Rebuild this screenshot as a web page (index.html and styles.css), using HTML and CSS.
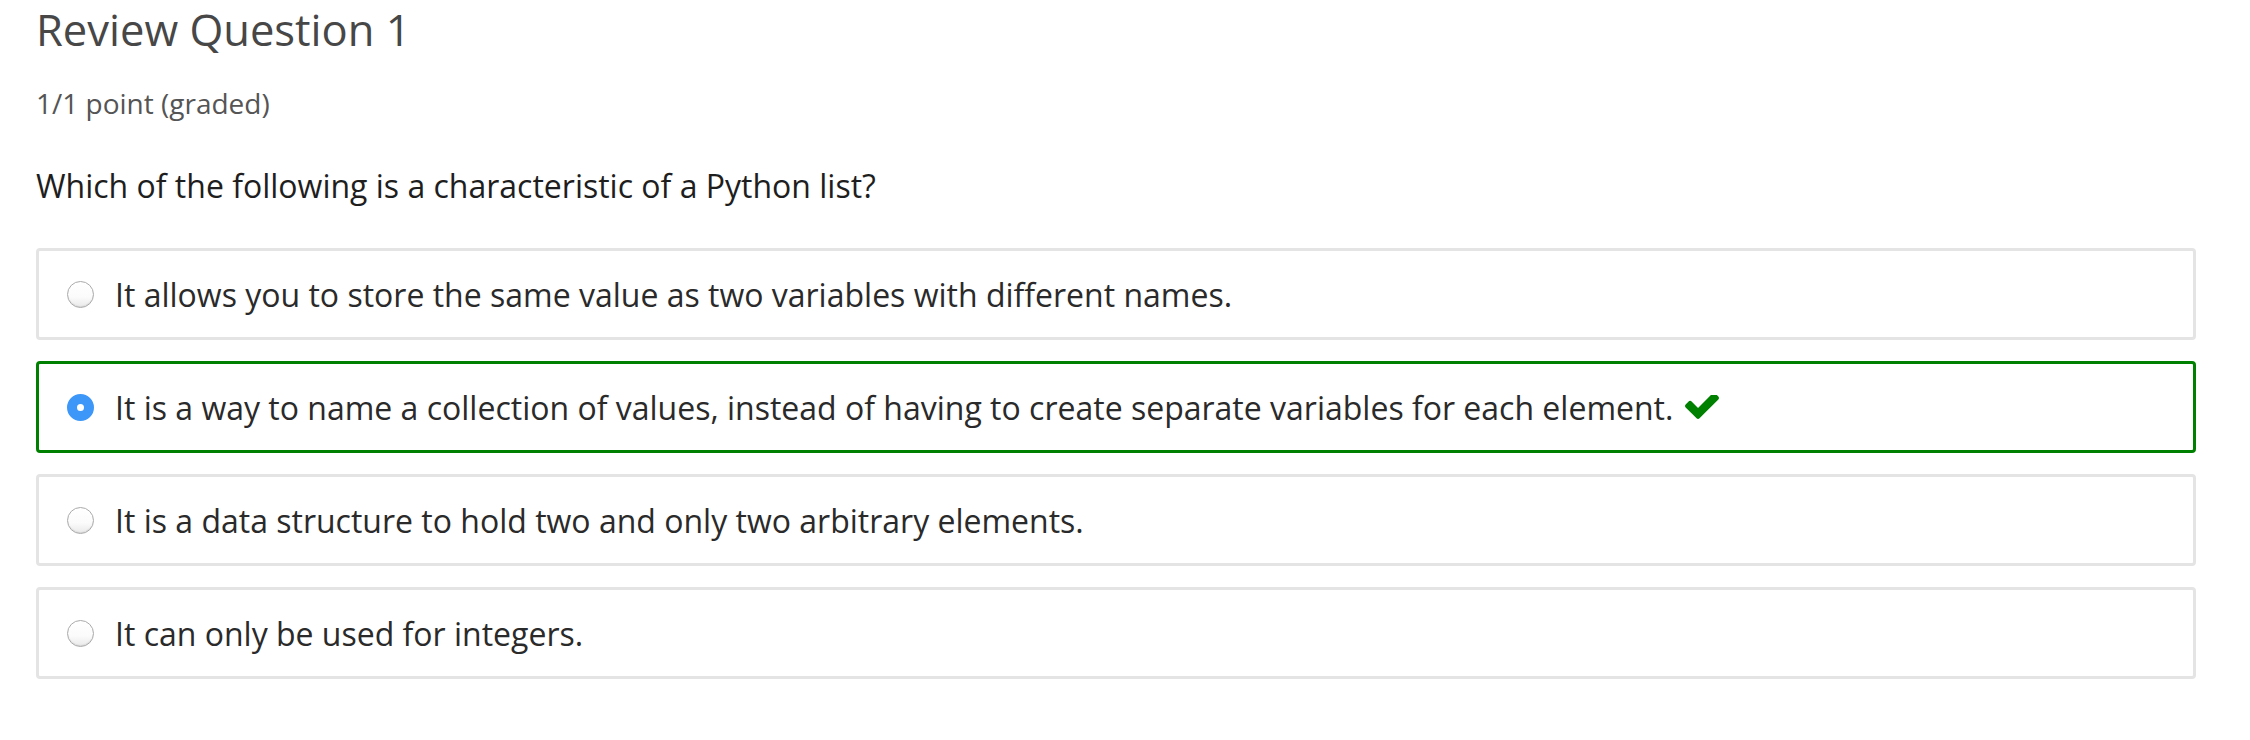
FILE: index.html
```html
<!DOCTYPE html>
<html lang="en">
<head>
<meta charset="utf-8">
<title>Review Question 1</title>
<link rel="stylesheet" href="styles.css">
</head>
<body>
<main class="problem">
  <h3 class="title">Review Question 1</h3>
  <div class="progress">1/1 point (graded)</div>
  <p class="question">Which of the following is a characteristic of a Python list?</p>
  <div class="choices">
    <label class="choice">
      <span class="radio"></span>
      <span class="text">It allows you to store the same value as two variables with different names.</span>
    </label>
    <label class="choice correct">
      <span class="radio checked"></span>
      <span class="text">It is a way to name a collection of values, instead of having to create separate variables for each element.</span>
      <svg class="check" viewBox="121 430 1550 1096" aria-hidden="true"><path d="M1671 566q0 40-28 68l-724 724-136 136q-28 28-68 28t-68-28l-136-136-362-362q-28-28-28-68t28-68l136-136q28-28 68-28t68 28l294 295 656-657q28-28 68-28t68 28l136 136q28 28 28 68z"/></svg>
    </label>
    <label class="choice">
      <span class="radio"></span>
      <span class="text">It is a data structure to hold two and only two arbitrary elements.</span>
    </label>
    <label class="choice">
      <span class="radio"></span>
      <span class="text">It can only be used for integers.</span>
    </label>
  </div>
</main>
</body>
</html>
```

FILE: styles.css
```css
html, body {
  margin: 0;
  padding: 0;
  background: #ffffff;
}

body {
  font-family: "Open Sans", "Liberation Sans", sans-serif;
}

.problem {
  width: 2160px;
  padding: 5px 0 0 36px;
}

.title {
  margin: 0;
  font-size: 43.5px;
  line-height: 50px;
  font-weight: 400;
  color: #474747;
}

.progress {
  margin-top: 29px;
  font-size: 28px;
  line-height: 38px;
  color: #555555;
}

.question {
  margin: 41px 0 0;
  font-size: 32px;
  line-height: 45px;
  color: #1e1e1e;
}

.choices {
  margin-top: 40px;
  display: flex;
  flex-direction: column;
  gap: 21px;
}

.choice {
  box-sizing: border-box;
  height: 92px;
  display: flex;
  align-items: center;
  border: 3px solid #e4e4e4;
  border-radius: 4px;
  padding-left: 28px;
  font-size: 32px;
  line-height: 45px;
  color: #2a2a2a;
}

.choice.correct {
  border-color: #008000;
}

.radio {
  box-sizing: border-box;
  flex: none;
  width: 27px;
  height: 27px;
  border-radius: 50%;
  border: 1px solid #aaaaaa;
  background: linear-gradient(#ffffff 0%, #fbfbfb 60%, #e9e9e9 100%);
  box-shadow: inset 0 -1px 1px rgba(0, 0, 0, 0.08);
  margin-right: 21px;
}

.radio.checked {
  border: 10px solid #3d97f8;
  background: #ffffff;
  box-shadow: none;
}

.check {
  width: 34px;
  height: 24px;
  margin-left: 12px;
  fill: #008000;
}
```
